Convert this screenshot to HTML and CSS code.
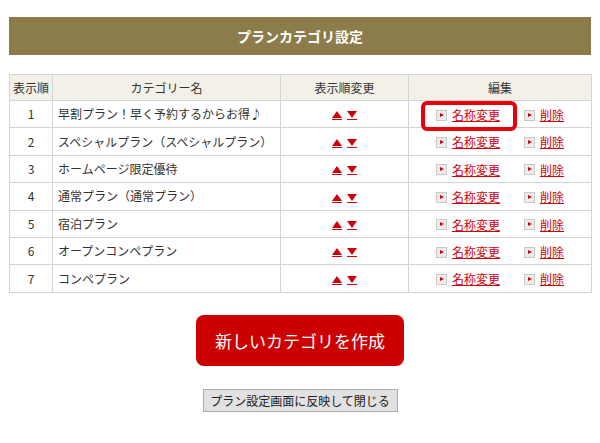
FILE: index.html
```html
<!DOCTYPE html>
<html lang="ja">
<head>
<meta charset="utf-8">
<title>プランカテゴリ設定</title>
<link rel="stylesheet" href="styles.css">
</head>
<body>
<div class="page">
  <h1 class="title-bar">プランカテゴリ設定</h1>
  <table class="cat-table">
    <colgroup>
      <col class="c-no"><col class="c-name"><col class="c-order"><col class="c-edit">
    </colgroup>
    <thead>
      <tr><th>表示順</th><th>カテゴリー名</th><th>表示順変更</th><th>編集</th></tr>
    </thead>
    <tbody>
      <tr><td class="no">1</td><td class="name">早割プラン！早く予約するからお得♪</td><td class="order"><a href="#" class="arr up" title="上へ"></a><a href="#" class="arr down" title="下へ"></a></td><td class="edit"><span class="grp hl"><span class="ico"></span><a href="#">名称変更</a></span><span class="grp"><span class="ico"></span><a href="#">削除</a></span></td></tr>
      <tr><td class="no">2</td><td class="name">スペシャルプラン（スペシャルプラン）</td><td class="order"><a href="#" class="arr up" title="上へ"></a><a href="#" class="arr down" title="下へ"></a></td><td class="edit"><span class="grp"><span class="ico"></span><a href="#">名称変更</a></span><span class="grp"><span class="ico"></span><a href="#">削除</a></span></td></tr>
      <tr><td class="no">3</td><td class="name">ホームページ限定優待</td><td class="order"><a href="#" class="arr up" title="上へ"></a><a href="#" class="arr down" title="下へ"></a></td><td class="edit"><span class="grp"><span class="ico"></span><a href="#">名称変更</a></span><span class="grp"><span class="ico"></span><a href="#">削除</a></span></td></tr>
      <tr><td class="no">4</td><td class="name">通常プラン（通常プラン）</td><td class="order"><a href="#" class="arr up" title="上へ"></a><a href="#" class="arr down" title="下へ"></a></td><td class="edit"><span class="grp"><span class="ico"></span><a href="#">名称変更</a></span><span class="grp"><span class="ico"></span><a href="#">削除</a></span></td></tr>
      <tr><td class="no">5</td><td class="name">宿泊プラン</td><td class="order"><a href="#" class="arr up" title="上へ"></a><a href="#" class="arr down" title="下へ"></a></td><td class="edit"><span class="grp"><span class="ico"></span><a href="#">名称変更</a></span><span class="grp"><span class="ico"></span><a href="#">削除</a></span></td></tr>
      <tr><td class="no">6</td><td class="name">オープンコンペプラン</td><td class="order"><a href="#" class="arr up" title="上へ"></a><a href="#" class="arr down" title="下へ"></a></td><td class="edit"><span class="grp"><span class="ico"></span><a href="#">名称変更</a></span><span class="grp"><span class="ico"></span><a href="#">削除</a></span></td></tr>
      <tr><td class="no">7</td><td class="name">コンペプラン</td><td class="order"><a href="#" class="arr up" title="上へ"></a><a href="#" class="arr down" title="下へ"></a></td><td class="edit"><span class="grp"><span class="ico"></span><a href="#">名称変更</a></span><span class="grp"><span class="ico"></span><a href="#">削除</a></span></td></tr>
    </tbody>
  </table>
  <div class="actions">
    <button class="btn-create" type="button">新しいカテゴリを作成</button>
    <button class="btn-close" type="button">プラン設定画面に反映して閉じる</button>
  </div>
</div>
</body>
</html>
```
FILE: styles.css
```css
html, body {
  margin: 0;
  padding: 0;
  background: #fff;
}
body {
  font-family: "Noto Sans CJK JP", "Noto Sans", sans-serif;
  font-size: 12px;
  color: #333;
}
.page {
  padding: 17px 9px 0 9px;
}
.title-bar {
  margin: 0;
  height: 38px;
  line-height: 38px;
  background: #8c7c4c;
  color: #fff;
  font-size: 14px;
  font-weight: bold;
  text-align: center;
}
.cat-table {
  margin-top: 19px;
  width: 582px;
  border-collapse: collapse;
  table-layout: fixed;
}
.c-no { width: 43px; }
.c-name { width: 228px; }
.c-order { width: 128px; }
.c-edit { width: 183px; }
.cat-table th,
.cat-table td {
  border: 1px solid #d4d4d4;
  padding: 0;
  line-height: 16px;
}
.cat-table th {
  height: 25px;
  background: #f3f1e7;
  font-weight: normal;
  text-align: center;
  color: #333;
}
.cat-table tbody tr {
  height: 27.4px;
}
.cat-table td.no {
  text-align: center;
}
.cat-table td.name {
  padding-left: 5px;
}
.cat-table td.order {
  text-align: center;
}
.arr {
  display: inline-block;
  vertical-align: middle;
  width: 10px;
  padding-bottom: 1px;
  border-bottom: 1px solid #d0000c;
}
.arr + .arr {
  margin-left: 5px;
}
.arr::before {
  content: "";
  display: block;
  width: 0;
  height: 0;
  border-left: 5px solid transparent;
  border-right: 5px solid transparent;
}
.up::before {
  border-bottom: 7px solid #d0000c;
}
.down::before {
  border-top: 7px solid #d0000c;
}
.edit {
  text-align: center;
  white-space: nowrap;
}
.grp {
  display: inline-flex;
  align-items: center;
  gap: 5px;
  vertical-align: middle;
}
.grp + .grp {
  margin-left: 24px;
}
.grp a {
  color: #d0000c;
  text-decoration: underline;
}
.ico {
  position: relative;
  width: 9px;
  height: 9px;
  background: #ececec;
  border: 1px solid #c8c8c8;
}
.ico::after {
  content: "";
  position: absolute;
  left: 3px;
  top: 2px;
  border-left: 4px solid #d0000c;
  border-top: 2.5px solid transparent;
  border-bottom: 2.5px solid transparent;
}
.hl {
  position: relative;
}
.hl::before {
  content: "";
  position: absolute;
  left: -15px;
  right: -17px;
  top: -6px;
  bottom: -8px;
  border: 4px solid #e8000d;
  border-radius: 6px;
}
.actions {
  display: flex;
  flex-direction: column;
  align-items: center;
  padding-top: 22px;
}
.btn-create {
  width: 208px;
  height: 51px;
  background: #cc0000;
  color: #fff;
  border: none;
  border-radius: 8px;
  font-family: "Noto Sans CJK JP", "Noto Sans", sans-serif;
  font-size: 17px;
  padding: 0;
}
.btn-close {
  margin-top: 23px;
  width: 195px;
  height: 23px;
  background: #e1e1e1;
  border: 1px solid #adadad;
  color: #222;
  font-family: "Noto Sans CJK JP", "Noto Sans", sans-serif;
  font-size: 12px;
  padding: 0;
}
```
